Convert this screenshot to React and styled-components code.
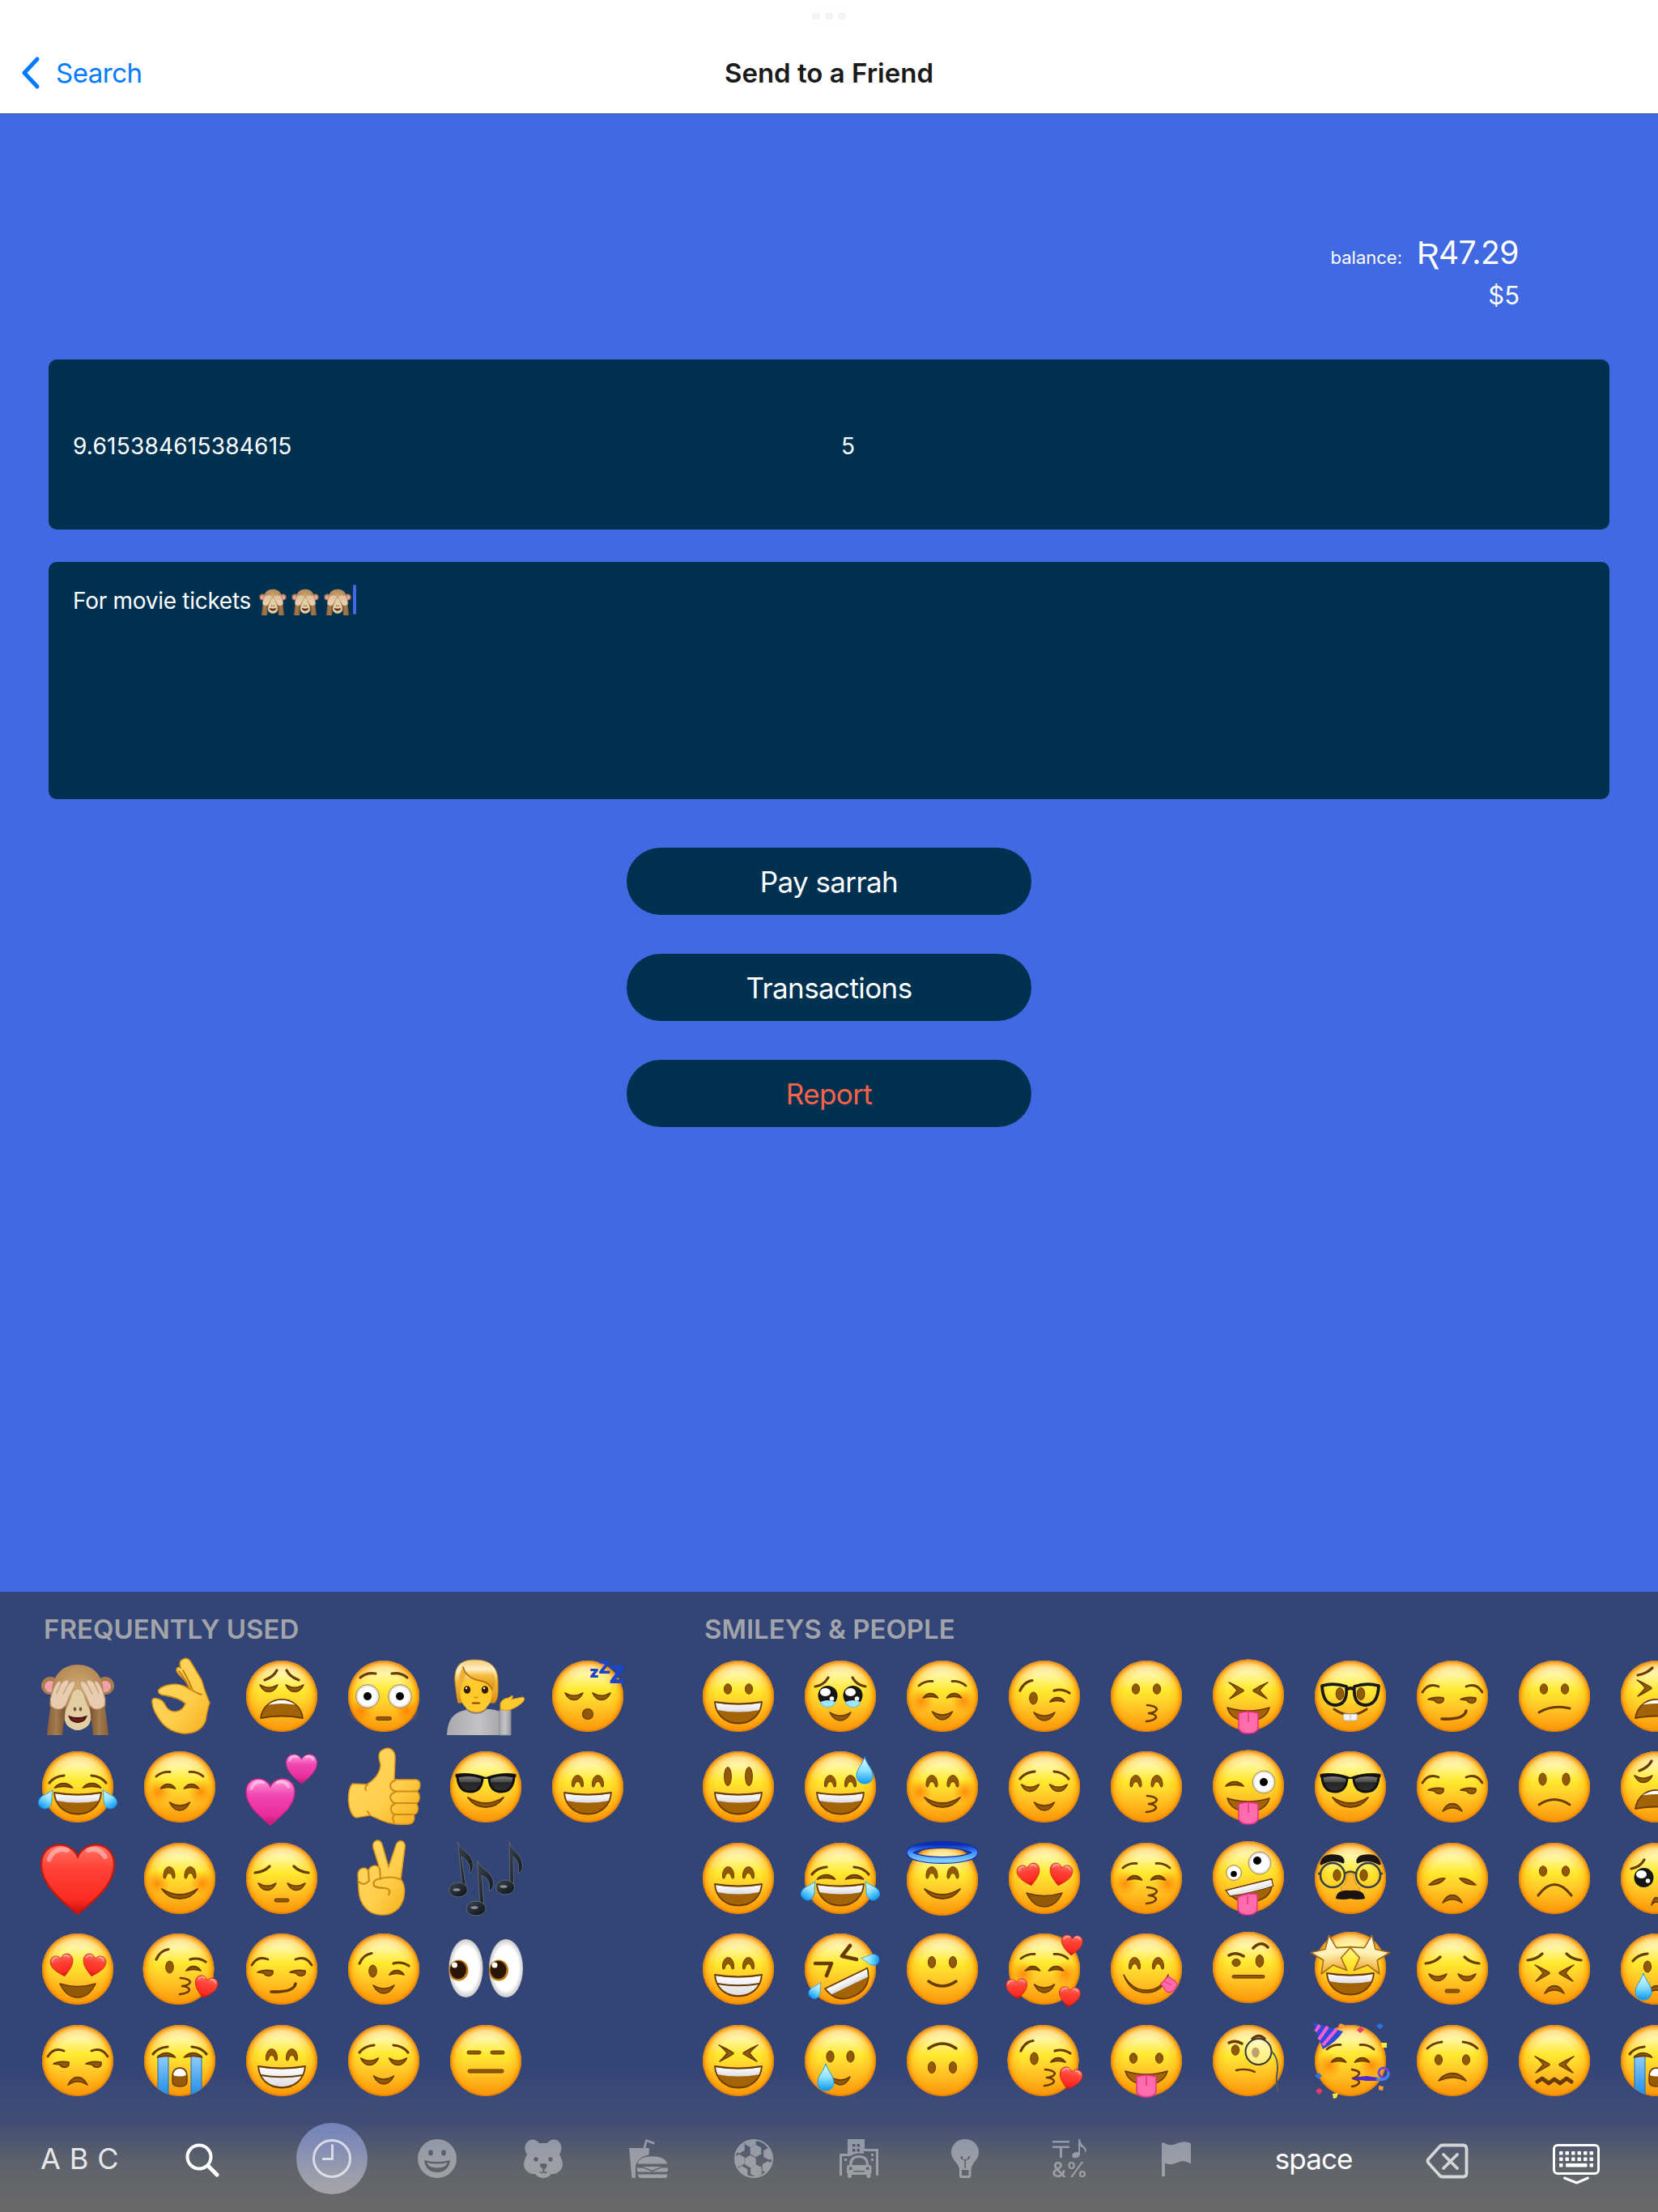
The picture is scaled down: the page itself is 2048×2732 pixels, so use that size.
import React from 'react';
import styled, { createGlobalStyle } from 'styled-components';

const GlobalStyle = createGlobalStyle`
  *, *::before, *::after { box-sizing: border-box; }
  html, body { margin: 0; padding: 0; }
  body {
    font-family: Inter, "Liberation Sans", sans-serif;
    background: #4169e1;
    overflow: hidden;
  }
`;

const Screen = styled.div`
  display: flex;
  flex-direction: column;
  width: 2048px;
  height: 2732px;
  background: #4169e1;
  overflow: hidden;
`;

/* ---------- navigation bar ---------- */

const NavBar = styled.header`
  display: grid;
  grid-template-columns: 1fr auto 1fr;
  grid-template-rows: 40px 100px;
  height: 141px;
  background: #ffffff;
  border-bottom: 1px solid #33498f;
`;

const Multitask = styled.div`
  grid-column: 1 / -1;
  display: flex;
  justify-content: center;
  align-items: center;
  gap: 6px;
`;

const Dot = styled.i`
  width: 10px;
  height: 10px;
  border-radius: 50%;
  background: #f3f3f4;
`;

const BackButton = styled.div`
  display: flex;
  align-items: center;
  padding-left: 24px;
  color: #007aff;
  font-size: 33px;
  letter-spacing: -0.5px;
  line-height: 40px;
`;

const BackArrow = styled.svg`
  width: 28px;
  height: 44px;
  margin-right: 17px;
  fill: none;
  stroke: #007aff;
  stroke-width: 5;
  stroke-linecap: round;
  stroke-linejoin: round;
`;

const Title = styled.h1`
  margin: 0;
  align-self: center;
  font-size: 33px;
  font-weight: 600;
  line-height: 40px;
  color: #1a1a1a;
`;

/* ---------- payment form ---------- */

const Content = styled.main`
  height: 1825px;
  display: flex;
  flex-direction: column;
  align-items: stretch;
  padding: 143px 60px 0;
  color: #ffffff;
`;

const Balance = styled.div`
  display: flex;
  flex-direction: column;
  align-items: flex-end;
  height: 160px;
  padding-right: 111px;
`;

const BalanceLine = styled.div`
  display: flex;
  align-items: baseline;
  gap: 18px;
  height: 56px;
  padding-right: 1px;
  line-height: 56px;
`;

const BalanceLabel = styled.span`
  font-size: 22px;
`;

const BalanceValue = styled.span`
  font-size: 39px;
  letter-spacing: -0.5px;
`;

const Currency = styled.span`
  font-family: "Liberation Sans", sans-serif;
  font-size: 41px;
  letter-spacing: -0.5px;
`;

const Fiat = styled.div`
  font-size: 31px;
  line-height: 50px;
`;

const Panel = styled.section`
  display: flex;
  flex: none;
  align-items: ${(p) => (p.$top ? 'flex-start' : 'center')};
  height: ${(p) => p.$height}px;
  margin-bottom: 40px;
  padding: ${(p) => (p.$top ? '28px 30px' : '3px 30px 0')};
  border-radius: 10px;
  background: #003151;
  font-size: 28px;
  line-height: 40px;
`;

const Amount = styled.div`
  flex: none;
  width: 949px;
  letter-spacing: 0.22px;
`;

const Note = styled.span`
  white-space: pre;
  letter-spacing: -0.28px;
`;

const NoteEmoji = styled.span`
  display: inline-flex;
  gap: 6px;
  margin-left: 2px;
`;

const MiniEmoji = styled.svg`
  width: 34px;
  height: 34px;
  margin-top: 4px;
  overflow: visible;
`;

const Caret = styled.span`
  width: 4px;
  height: 37px;
  margin: 0 0 0 2px;
  border-radius: 2px;
  background: #4169e1;
`;

const Actions = styled.div`
  display: flex;
  flex-direction: column;
  align-items: center;
  gap: 48px;
  margin-top: 20px;
`;

const ActionButton = styled.button`
  width: 500px;
  height: 83px;
  padding: 1px 0 0;
  border: 0;
  border-radius: 42px;
  background: #003151;
  color: ${(p) => (p.$danger ? '#ff6347' : '#ffffff')};
  font-family: inherit;
  font-size: 35px;
  letter-spacing: -0.6px;
`;

/* ---------- emoji keyboard ---------- */

const Keyboard = styled.section`
  display: flex;
  flex-direction: column;
  height: 766px;
  background: linear-gradient(
    180deg,
    #334477 0,
    #334477 585px,
    #3b4a78 625px,
    #414d75 655px,
    #50586f 682px,
    #5e626b 706px,
    #656668 735px,
    #686868 766px
  );
`;

const Sections = styled.div`
  display: flex;
  gap: 60px;
  height: 634px;
  padding-left: 33px;
  overflow: hidden;
`;

const Section = styled.div`
  flex: none;
`;

const SectionTitle = styled.h2`
  margin: 0;
  height: 72.7px;
  padding: 26px 0 0 21px;
  font-size: 33px;
  font-weight: 600;
  line-height: 41px;
  color: #a2a4a9;
`;

const EmojiGrid = styled.div`
  display: grid;
  grid-auto-flow: column;
  grid-template-rows: repeat(5, 112.6px);
  grid-auto-columns: 126px;
`;

const EmojiSvg = styled.svg`
  display: block;
  width: 126px;
  height: 112px;
  overflow: visible;
`;

const BottomBar = styled.div`
  display: flex;
  align-items: center;
  height: 132px;
  padding-left: 50px;
  color: #ffffff;
  font-size: 35px;
  line-height: 42px;
`;

const AbcKey = styled.div`
  width: 162px;
  white-space: nowrap;
  font-size: 36px;
  letter-spacing: 0.4px;
  color: #e6e6e9;
`;

const KeySlot = styled.div`
  display: flex;
  justify-content: center;
  width: ${(p) => p.$width}px;
  letter-spacing: -0.9px;
`;

const CategoryKey = styled.div`
  display: flex;
  justify-content: center;
  width: 130.3px;
`;

const CategoryDisc = styled.div`
  display: flex;
  align-items: center;
  justify-content: center;
  width: 88px;
  height: 88px;
  border-radius: 50%;
  background: ${(p) =>
    p.$active ? 'linear-gradient(180deg, #7283bb 0%, #8790b4 40%, #9a9cac 70%, #a6a6a8 100%)' : 'transparent'};
`;

const CategoryIcon = styled.svg`
  width: 48px;
  height: 48px;
  overflow: visible;
  fill: #ffffff;
  opacity: ${(p) => (p.$active ? 0.68 : 0.39)};
`;

const BarIcon = styled.svg`
  width: ${(p) => p.$w}px;
  height: ${(p) => p.$h}px;
  margin-top: ${(p) => p.$drop}px;
  fill: none;
  stroke: #ffffff;
  stroke-linecap: round;
  stroke-linejoin: round;
  opacity: ${(p) => p.$opacity || 1};
`;

/* ---------- shared paint ---------- */

const Paint = styled.svg`
  position: absolute;
  width: 0;
  height: 0;
`;

const EmojiPaint = () => (
  <Paint>
    <defs>
      <linearGradient id="skin" x1="0" y1="0" x2="0" y2="1">
        <stop offset="0" stopColor="#fffbd6" />
        <stop offset=".16" stopColor="#fff9b4" />
        <stop offset=".42" stopColor="#ffe92f" />
        <stop offset=".6" stopColor="#ffcf2b" />
        <stop offset=".8" stopColor="#ffb31a" />
        <stop offset="1" stopColor="#f2940e" />
      </linearGradient>
      <radialGradient id="rim" cx=".5" cy=".5" r=".5" fx=".5" fy=".5">
        <stop offset=".62" stopColor="#ff9f0a" stopOpacity="0" />
        <stop offset=".82" stopColor="#ffa008" stopOpacity=".26" />
        <stop offset=".93" stopColor="#ff9900" stopOpacity=".72" />
        <stop offset="1" stopColor="#d8740a" stopOpacity=".98" />
      </radialGradient>
      <radialGradient id="blush">
        <stop offset="0" stopColor="#ff7400" stopOpacity=".75" />
        <stop offset="1" stopColor="#ff8a00" stopOpacity="0" />
      </radialGradient>
      <linearGradient id="hand" x1="0" y1="0" x2="1" y2="1">
        <stop offset="0" stopColor="#ffd968" />
        <stop offset=".6" stopColor="#ffce4a" />
        <stop offset="1" stopColor="#f5ad1c" />
      </linearGradient>
      <linearGradient id="teeth" x1="0" y1="0" x2="0" y2="1">
        <stop offset="0" stopColor="#ffffff" />
        <stop offset="1" stopColor="#dcdce4" />
      </linearGradient>
      <linearGradient id="red" x1="0" y1="0" x2="0" y2="1">
        <stop offset="0" stopColor="#ff7466" />
        <stop offset=".35" stopColor="#ff4136" />
        <stop offset=".8" stopColor="#fb2a20" />
        <stop offset="1" stopColor="#c40d0d" />
      </linearGradient>
      <linearGradient id="pink" x1="0" y1="0" x2="0" y2="1">
        <stop offset="0" stopColor="#ff9fdc" />
        <stop offset=".35" stopColor="#f146b2" />
        <stop offset=".8" stopColor="#e82a9b" />
        <stop offset="1" stopColor="#c3136c" />
      </linearGradient>
      <linearGradient id="water" x1="0" y1="0" x2="0" y2="1">
        <stop offset="0" stopColor="#e8fbff" />
        <stop offset=".5" stopColor="#8fe2ff" />
        <stop offset="1" stopColor="#0a98f5" />
      </linearGradient>
      <linearGradient id="stream" x1="0" y1="0" x2="0" y2="1">
        <stop offset="0" stopColor="#8fcdf8" />
        <stop offset="1" stopColor="#1f8be6" />
      </linearGradient>
      <linearGradient id="lens" x1="0" y1="0" x2="0" y2="1">
        <stop offset="0" stopColor="#8a8a8a" />
        <stop offset=".4" stopColor="#4a4a4a" />
        <stop offset=".45" stopColor="#262626" />
        <stop offset="1" stopColor="#303030" />
      </linearGradient>
      <radialGradient id="white">
        <stop offset=".75" stopColor="#ffffff" />
        <stop offset="1" stopColor="#c9c9c9" />
      </radialGradient>
      <linearGradient id="star" x1="0" y1="0" x2="0" y2="1">
        <stop offset="0" stopColor="#fffef2" />
        <stop offset=".5" stopColor="#fdefb0" />
        <stop offset="1" stopColor="#eca52a" />
      </linearGradient>
      <linearGradient id="halo" x1="0" y1="0" x2="0" y2="1">
        <stop offset="0" stopColor="#0b2fb8" />
        <stop offset=".5" stopColor="#3f8cff" />
        <stop offset="1" stopColor="#7fcaff" />
      </linearGradient>
      <radialGradient id="fur" cx=".5" cy=".4" r=".6">
        <stop offset="0" stopColor="#d0a873" />
        <stop offset=".7" stopColor="#b58a58" />
        <stop offset="1" stopColor="#8b6540" />
      </radialGradient>
      <linearGradient id="arm" x1="0" y1="0" x2="1" y2="0">
        <stop offset="0" stopColor="#866039" />
        <stop offset=".5" stopColor="#a67c4f" />
        <stop offset="1" stopColor="#775231" />
      </linearGradient>
      <linearGradient id="shirt" x1="0" y1="0" x2="1" y2="0">
        <stop offset="0" stopColor="#a9a9ad" />
        <stop offset=".5" stopColor="#c3c3c6" />
        <stop offset="1" stopColor="#98989c" />
      </linearGradient>
      <linearGradient id="hair" x1="0" y1="0" x2="0" y2="1">
        <stop offset="0" stopColor="#f6cf86" />
        <stop offset=".25" stopColor="#fff0c4" />
        <stop offset=".5" stopColor="#f3bb3e" />
        <stop offset="1" stopColor="#dc8d10" />
      </linearGradient>
      <linearGradient id="ink" x1="0" y1="0" x2="1" y2="1">
        <stop offset="0" stopColor="#3c4650" />
        <stop offset="1" stopColor="#0d1014" />
      </linearGradient>
      <clipPath id="faceClip"><circle r="44" /></clipPath>
    </defs>
  </Paint>
);

/* ---------- emoji building blocks, centred on 0,0 with a 44px face ---------- */

const BROWN = '#6a3b00';
const EYE = '#925a08';

const At = ({ x = 0, y = 0, flip, rot = 0, s = 1, children }) => (
  <g transform={`translate(${x} ${y}) rotate(${rot}) scale(${flip ? -s : s} ${s})`}>{children}</g>
);
const Pair = ({ x, y, children }) => (
  <>
    <At x={-x} y={y}>{children}</At>
    <At x={x} y={y} flip>{children}</At>
  </>
);
const Disc = ({ x = 0, y = 0 }) => (
  <g transform={`translate(${x} ${y})`}>
    <circle r="44" fill="url(#skin)" />
    <circle r="44" fill="url(#rim)" />
  </g>
);
const Stroke = ({ d, w = 3.2, c = BROWN }) => (
  <path d={d} fill="none" stroke={c} strokeWidth={w} strokeLinecap="round" strokeLinejoin="round" />
);
const Dots = ({ x = 13, y = -9, rx = 4.6, ry = 6.2 }) => (
  <>
    <ellipse cx={-x} cy={y} rx={rx} ry={ry} fill={EYE} stroke={BROWN} strokeWidth="1" />
    <ellipse cx={x} cy={y} rx={rx} ry={ry} fill={EYE} stroke={BROWN} strokeWidth="1" />
  </>
);
const ArchEye = () => (
  <path d="M-7 6C-7.500-10.500 7.500-10.500 7 6C6.500 9 4.800 9 4 6C2.500 0-2.500 0-4 6C-4.800 9-6.500 9-7 6Z" fill={EYE} stroke={BROWN} strokeWidth="1" />
);
const Arches = ({ x = 12.5, y = -8 }) => <Pair x={x} y={y}><ArchEye /></Pair>;
const ShutEye = ({ w = 9 }) => (
  <path d={`M${-w} 3C${-w / 2}-4 ${w / 2}-4 ${w} 3Q0-.5 ${-w} 3Z`} fill={EYE} stroke={BROWN} strokeWidth="1.800" strokeLinejoin="round" />
);
const DownEye = () => (
  <path d="M-11-4Q0 2.500 11-4Q7 4.500 0 4.500Q-7 4.500-11-4Z" fill={EYE} stroke={BROWN} strokeWidth="1.600" strokeLinejoin="round" />
);
const Squint = ({ x = 14, y = -8 }) => (
  <Pair x={x} y={y}>
    <path d="M-9-10Q0-6 8.500-1Q9.500 0 8.500 1Q0 6-8 10Q-2 4 1 0Q-2-5-9-10Z" fill={EYE} stroke={BROWN} strokeWidth="1.400" strokeLinejoin="round" />
  </Pair>
);
const SideEye = ({ x = 20, y = 4 }) => (
  <>
    {[-x, x].map((cx) => (
      <At key={cx} x={cx} y={y}>
        <path d="M-10 0Q-3-4 9-2Q10 4 4 4.500Q-1 4-2 1Z" fill={EYE} stroke={BROWN} strokeWidth="1.600" strokeLinejoin="round" />
      </At>
    ))}
  </>
);
const FlatBrows = ({ x = 27, y = -10 }) => <Pair x={x} y={y}><Stroke d="M-10 5Q-3-7 10-2" w={2.8} /></Pair>;
const SoftBrows = ({ x = 20, y = -16 }) => <Pair x={x} y={y}><Stroke d="M-9 3Q-2-3 8-2.500" w={2.8} /></Pair>;
const RaisedBrows = ({ x = 21, y = -15 }) => <Pair x={x} y={y}><Stroke d="M-9 5Q-3-3 9-4" /></Pair>;
const SadBrows = ({ x = 24, y = -12 }) => <Pair x={x} y={y}><Stroke d="M-9 4Q2 3 9-4" /></Pair>;
const Blush = ({ x = 27, y = 6 }) => (
  <>
    <circle cx={-x} cy={y} r="16" fill="url(#blush)" />
    <circle cx={x} cy={y} r="16" fill="url(#blush)" />
  </>
);
const Grin = ({ full }) => (
  <g strokeLinejoin="round">
    <path d="M-29 7Q0 12 29 7C28 23 16 33.500 0 33.500C-16 33.500-28 23-29 7Z" fill="#a36307" />
    {full ? (
      <>
        <path d="M-28 8Q0 13 28 8C27 23 15 32 0 32C-15 32-27 23-28 8Z" fill="url(#teeth)" />
        <Stroke d="M-26 18Q0 22.500 26 18" w={2} />
      </>
    ) : (
      <path d="M-28 8Q0 13 28 8Q28 14 26 17Q0 22 -26 17Q-28 14-28 8Z" fill="url(#teeth)" />
    )}
    <path d="M-29 7Q0 12 29 7C28 23 16 33.500 0 33.500C-16 33.500-28 23-29 7Z" fill="none" stroke={BROWN} strokeWidth="1.800" />
  </g>
);
const SmallSmile = ({ y = 24, w = 12.5 }) => (
  <path transform={`translate(0 ${y})`} d={`M${-w}-5Q0 3 ${w}-5Q${w * 0.6} 5 0 5Q${-w * 0.6} 5 ${-w}-5Z`} fill={EYE} stroke={BROWN} strokeWidth="1.600" strokeLinejoin="round" />
);
const SmallFrown = ({ y = 25, w = 12 }) => (
  <path transform={`translate(0 ${y})`} d={`M${-w} 5C${-w * 0.5}-7.500 ${w * 0.5}-7.500 ${w} 5Q0-3 ${-w} 5Z`} fill={EYE} stroke={BROWN} strokeWidth="1.600" strokeLinejoin="round" />
);
const WideSmile = () => (
  <path d="M-22 13Q0 27 22 13Q14 25 0 25Q-14 25-22 13Z" fill={EYE} stroke={BROWN} strokeWidth="1.800" strokeLinejoin="round" />
);
const Wail = () => (
  <>
    <path d="M-26 27C-24 12-12 4 0 4C12 4 24 12 26 27Q0 22-26 27Z" fill="#a36307" stroke={BROWN} strokeWidth="1.800" strokeLinejoin="round" />
    <path d="M-17 10.500Q0-1 17 10.500Q0 7.500-17 10.500Z" fill="#fff" />
  </>
);
const TongueMouth = ({ y = 13 }) => (
  <At y={y}>
    <path d="M-26 0Q0 8 26 0C22 13 12 16 0 16C-12 16-22 13-26 0Z" fill="#a36307" stroke={BROWN} strokeWidth="1.600" strokeLinejoin="round" />
    <path d="M-12 7Q0 3 12 7V23Q12 32 0 32Q-12 32-12 23Z" fill="#ff6cab" stroke="#ec2f84" strokeWidth="1.500" />
    <path d="M0 6V18" stroke="#e8357f" strokeWidth="1.500" />
  </At>
);
const Kiss = ({ x = 6, y = 21 }) => (
  <At x={x} y={y}>
    <Stroke d="M-5-10Q6-9 7-5Q6-1-3 0Q6 1 6 5Q4 9-6 10" w={2.6} />
  </At>
);
const Heart = ({ x, y, w = 28, rot = 0, fill = 'url(#red)', edge = '#c21a10' }) => (
  <At x={x} y={y} rot={rot} s={w / 28}>
    <path d="M0 14C-6 9-14 3-14-5C-14-14-3-15 0-8C3-15 14-14 14-5C14 3 6 9 0 14Z" fill={fill} stroke={edge} strokeWidth=".7" />
    <path d="M-11-7Q-9-12-4-10.500M4-10.500Q8-12 10.500-8" stroke="#fff" strokeOpacity=".4" strokeWidth="1.800" strokeLinecap="round" fill="none" />
  </At>
);
const Drop = ({ x, y, s = 1, rot = 0 }) => (
  <At x={x} y={y} s={s} rot={rot}>
    <path d="M0-17C3-7 10-2 10 6C10 12.500 5.500 16 0 16C-5.500 16-10 12.500-10 6C-10-2-3-7 0-17Z" fill="url(#water)" stroke="#149bea" strokeWidth="1" />
  </At>
);
const JoyTears = () => (
  <>
    <At x={-38} y={15} rot={32}><Drop x={0} y={0} s={0.78} /></At>
    <At x={38} y={15} rot={-32}><Drop x={0} y={0} s={0.78} /></At>
  </>
);
const BigEye = ({ x, y, r = 14.5, p = 5, px = 0, py = 0 }) => (
  <>
    <circle cx={x} cy={y} r={r} fill="url(#white)" stroke="#a97c1e" strokeWidth=".8" />
    <circle cx={x + px} cy={y + py} r={p} fill="#000" />
  </>
);
const PleadEyes = ({ wet }) => (
  <>
    {[-15.5, 15.5].map((x) => (
      <At key={x} x={x} y={-1}>
        {wet && <ellipse cy="6" rx="10" ry="9" fill="#45c4f5" />}
        <circle r="12" fill="#161616" />
        <ellipse cx="-3" cy="-4" rx="6.500" ry="5" fill="#fff" />
        <circle cx="5" cy="4" r="2.800" fill="#fff" />
        {wet && <path d="M-9 8Q0 4 9 8Q6 14 0 14Q-6 14-9 8Z" fill="#9fe6ff" />}
      </At>
    ))}
  </>
);
const WinkParts = ({ dx = 0, dy = 0 }) => (
  <At x={dx} y={dy}>
    <Stroke d="M-30-7Q-25-18-15-19.500" />
    <Stroke d="M12-7Q22-10 31-4" />
    <ellipse cx="-13.500" cy="2.500" rx="4.800" ry="7.500" fill={EYE} stroke={BROWN} strokeWidth="1" />
    <At x={16} y={4}><ShutEye /></At>
  </At>
);
const Starry = ({ x, y, rot }) => (
  <At x={x} y={y} rot={rot}>
    <path d="M0-25L7-8.500L25-7L11 4.500L16 21L0 12L-16 21L-11 4.500L-25-7L-7-8.500Z" fill="url(#star)" stroke="#a86a10" strokeWidth="1.600" strokeLinejoin="round" />
  </At>
);
const Shades = () => (
  <>
    <path d="M-37-16Q-20-19 0-12Q20-19 37-16Q39-13 35-10L-35-10Q-39-13-37-16Z" fill="#161616" />
    <path d="M-35-13Q-18-17-4-11Q-5 6-19 6Q-34 6-35-13Z" fill="url(#lens)" stroke="#111" strokeWidth="3" />
    <path d="M35-13Q18-17 4-11Q5 6 19 6Q34 6 35-13Z" fill="url(#lens)" stroke="#111" strokeWidth="3" />
  </>
);

const MonkeyArt = () => (
  <g>
    <circle cx="-34" cy="-13" r="11" fill="#a87c4c" />
    <circle cx="-34" cy="-12" r="7" fill="#f0a0a4" />
    <circle cx="34" cy="-13" r="11" fill="#a87c4c" />
    <circle cx="34" cy="-12" r="7" fill="#f0a0a4" />
    <path d="M0-39C22-39 32-22 32-4C38 8 34 25 22 30H-22C-34 25-38 8-32-4C-32-22-22-39 0-39Z" fill="url(#fur)" />
    <path d="M-6-5Q0-12 6-5Q10 8 15 18Q18 32 12 37Q6 42 0 42Q-6 42-12 37Q-18 32-15 18Q-10 8-6-5Z" fill="#e3cda2" />
    <path d="M-10.500 25Q0 29 10.500 25Q8 32 0 32Q-8 32-10.500 25Z" fill="#7a1720" stroke="#3b1606" strokeWidth="1.800" />
    <ellipse cx="-3.500" cy="16" rx="1.800" ry="2.400" fill="#7b5233" />
    <ellipse cx="3.500" cy="16" rx="1.800" ry="2.400" fill="#7b5233" />
    <Pair x={21} y={0}>
      <path d="M-9 8L6 12L2 48H-17Q-15 26-12 12Z" fill="url(#arm)" />
      <path d="M-12 12Q-14 4-10-6Q-6-17-2-19Q1-19 0-15Q5-21 9-20Q11-18 9-14Q14-20 17-18Q19-16 16-10Q11-2 8 6Q6 13 2 15Q-5 18-12 12Z" fill="#e8ccb0" stroke="#c09a75" strokeWidth="1" />
      <Stroke d="M0-15L-5-4M9-14L3-3" w={1.3} c="#c49a74" />
    </Pair>
  </g>
);

const EMOJI = {
  monkey: <MonkeyArt />,
  ok: (
    <g>
      <path d="M3-45Q10-50 15-40L27-20Q31-5 37 8Q34 16 32 30Q26 46 5 46Q-14 44-24 30Q-33 18-34 8Q-35 1-28 3Q-22 4-19 9Q-14 20-5 19Q4 18 7 9Q0 2-18-1Q-28-2-26-8Q-21-14-5-15Q6-14 14-7Q9-18 0-26Q-6-32-3-35Q-1-37 2-34Q-2-42 3-45Z" fill="url(#hand)" stroke="#dc9518" strokeWidth="1.500" />
      <Stroke d="M4-32Q12-18 16-7Q22-3 27-2M-1-31Q8-20 12-9" w={2} c="#c57f10" />
      <Stroke d="M7 9Q0 2-18-1" w={1.6} c="#d08c17" />
    </g>
  ),
  weary: (<><Disc /><Pair x={14} y={-26}><Stroke d="M-7 6Q4 2 8-6" /></Pair><Pair x={16} y={-10}><DownEye /></Pair><Wail /></>),
  joy: (<><Disc /><RaisedBrows x={26} y={-10} /><Pair x={17.5} y={-2}><ShutEye w={11} /></Pair><Grin /><JoyTears /></>),
  relaxed: (<><Disc /><Blush x={26} /><SoftBrows /><Pair x={14.500} y={-1}><ShutEye /></Pair><SmallSmile /></>),
  hearts: (<><Heart x={-14} y={17} w={60} fill="url(#pink)" edge="#c92588" /><Heart x={24.500} y={-23} w={38} fill="url(#pink)" edge="#c92588" /></>),
  heart: <Heart x={0} y={-1} w={90} />,
  blush: (<><Disc /><Blush x={28} /><Arches x={13} /><WideSmile /></>),
  pensive: (<><Disc /><SadBrows y={-11} /><Pair x={18} y={10}><DownEye /></Pair><rect x="-9" y="25" width="18" height="4" rx="2" fill={EYE} stroke={BROWN} /></>),
  heartEyes: (<><Disc /><Heart x={-19} y={-5} w={28} rot={-12} /><Heart x={20} y={-5} w={28} rot={12} /><path d="M-22 18Q0 25 22 18Q14 35 0 35Q-14 35-22 18Z" fill={EYE} stroke={BROWN} strokeWidth="1.500" strokeLinejoin="round" /></>),
  kissHeart: (<><Disc x={-1.5} /><WinkParts dx={1} dy={-5} /><Kiss x={6} /><Heart x={32} y={22} w={28} rot={14} /></>),
  smirk: (<><Disc /><FlatBrows /><SideEye /><Stroke d="M-13 28Q15 29 17 18" w={3.6} /></>),
  unamused: (<><Disc /><FlatBrows /><SideEye /><SmallFrown /></>),
  sob: (
    <>
      <Disc />
      <RaisedBrows x={24} y={-13} />
      <g clipPath="url(#faceClip)">
        <rect x="-27" y="-6" width="13" height="50" fill="url(#stream)" stroke="#1f6fb5" strokeWidth="1" />
        <rect x="14" y="-6" width="13" height="50" fill="url(#stream)" stroke="#1f6fb5" strokeWidth="1" />
      </g>
      <Pair x={16.5} y={-7}><ShutEye w={11} /></Pair>
      <path d="M-9 20Q-9 9 0 9Q9 9 9 20V26Q9 32 0 32Q-9 32-9 26Z" fill="#965908" stroke={BROWN} strokeWidth="1.400" />
      <path d="M-8 18Q-7 10 0 10Q7 10 8 18Q0 21-8 18Z" fill="#fff" />
    </>
  ),
  beam: (<><Disc /><Arches /><Grin full /></>),
  flushed: (<><Disc /><Blush x={28} y={18} /><Pair x={20} y={-26}><Stroke d="M-9 3Q-1-4 10-2" /></Pair><BigEye x={-20} y={0} /><BigEye x={20} y={0} /><rect x="-9.500" y="25.500" width="19" height="4" rx="2" fill={EYE} stroke={BROWN} /></>),
  thumb: (
    <g>
      <path d="M-4-44C6-52 15-46 14-34L13-9H40C47-8 46 4 40 5C46 8 45 19 40 20C44 24 43 33 37 34C39 40 37 46 30 46C10 48-2 42-17 35L-34 38C-46 34-46 0-38-4L-21-3C-10-10-4-18-4-28Q-8-40-4-44Z" fill="url(#hand)" stroke="#dc9518" strokeWidth="1.500" />
      <Stroke d="M40 5.500H16M39 20H15M36 34H14M14-8Q8-6 8-1Q9 5 16 5.500Q8 8 8 13Q10 20 15 20Q8 23 9 28Q10 34 14 34Q9 37 13 44M-20-3Q-24 0-22 4M-17 35L-20 30" w={2} c="#cd8a18" />
    </g>
  ),
  peace: (
    <g>
      <path d="M-13-38C-15-48-4-50-2-42L6-14L15-41C18-50 28-47 26-37L21 1C27 8 28 24 19 36Q10 46-4 45C-20 44-30 32-31 14L-32-4C-32-14-22-15-19-9C-16-18-8-17-5-12Z" fill="url(#hand)" stroke="#dc9518" strokeWidth="1.500" />
      <Stroke d="M-19-8L-18 3Q-25 10-31 4M-5-12L-4 1M20 1Q10-4-8 1Q-14 3-12 9Q-8 12 2 12Q10 14 6 20" w={2.2} c="#cd8a18" />
    </g>
  ),
  wink: (<><Disc /><WinkParts /><SmallSmile y={25} w={13} /></>),
  relieved: (<><Disc /><RaisedBrows /><Pair x={17.5} y={1}><DownEye /></Pair><SmallSmile /></>),
  tipping: (
    <g>
      <path d="M-48 48C-47 28-40 18-18 16H6C22 18 29 24 31 48Z" fill="url(#shirt)" />
      <path d="M-24 16Q-12 26 1 16L0 10H-23Z" fill="#f7a91c" stroke="#77777c" strokeWidth="1.500" />
      <path d="M-38-18C-39-34-34-45-14-45C8-45 15-34 15-18C15-6 16 2 11 8L4 8H-28L-34 8Q-36 0-38-18Z" fill="url(#hair)" stroke="#d08f1c" strokeWidth="1" />
      <path d="M-31-16Q-12-28 7-14Q9 2 4 10Q-2 19-12 19Q-22 19-28 10Q-33 2-31-16Z" fill="#ffca2a" />
      <path d="M-28-36Q-24-22-6-19Q4-17 8-8Q13-14 11-26Q8-40-14-42Q-24-42-28-36Z" fill="url(#hair)" />
      <path d="M-28-36Q-35-26-33-12L-30-6Q-30-18-24-27Z" fill="#efb038" />
      <Stroke d="M-28-36Q-24-22-6-19Q4-17 8-8" w={1.8} c="#b9740c" />
      <ellipse cx="-23" cy="-8" rx="4.200" ry="4.800" fill="#3a1c00" /><ellipse cx="-1" cy="-8" rx="4.200" ry="4.800" fill="#3a1c00" />
      <circle cx="-24" cy="-10" r="1.200" fill="#fff" /><circle cx="-2" cy="-10" r="1.200" fill="#fff" />
      <Stroke d="M-14 1Q-12 3-10 1" w={1.6} c="#d08c17" />
      <Stroke d="M-16 8.500H-8" w={2.2} c="#8b3a10" />
      <path d="M17 17Q24 14 31 17V48H17Z" fill="url(#shirt)" stroke="#88888c" strokeWidth="1" />
      <path d="M18 16V9Q20 3 28 2L33-1Q34 3 31 4L46 1Q50 3 45 8Q38 14 32 16Q25 19 18 16Z" fill="#ffca2e" stroke="#dc9518" strokeWidth="1" />
    </g>
  ),
  cool: (<><Disc /><Shades /><WideSmile /></>),
  notes: (
    <g fill="url(#ink)" stroke="#5c6674" strokeWidth="1">
      <path d="M-34.500-45C-30-32-14-32-16-12Q-17-8-20-6Q-17-20-30-27L-24 14H-28.500Z" />
      <ellipse cx="-34" cy="14" rx="11.500" ry="9" />
      <path d="M-10.500-22C-6-10 12-8 9 10Q8 14 4 16Q7 1-5-4L-2 36H-7Z" />
      <ellipse cx="-12" cy="37" rx="12" ry="9" />
      <path d="M29-45C33-32 47-30 45-12Q44-8 40-6Q43-20 34-27L34.500 10H30Z" />
      <ellipse cx="24" cy="11" rx="11.500" ry="9" />
      <g fill="#a9b4bf" stroke="none" opacity=".75">
        <ellipse cx="-36" cy="14" rx="4.500" ry="1.800" />
        <ellipse cx="-14" cy="36" rx="4.500" ry="1.800" />
        <ellipse cx="22" cy="10" rx="4.500" ry="1.800" />
      </g>
    </g>
  ),
  eyes: (
    <g>
      {[-24.5, 25].map((x) => (
        <g key={x}>
          <ellipse cx={x} cy="-1" rx="21" ry="36" fill="url(#white)" />
          <ellipse cx={x - 9} cy="1.500" rx="12" ry="13" fill="#b97a10" />
          <ellipse cx={x - 9.5} cy="1" rx="10" ry="11" fill="#2a1403" />
          <circle cx={x - 14} cy="-5" r="3.500" fill="#fff" />
        </g>
      ))}
    </g>
  ),
  expressionless: (<><Disc /><g fill={EYE} stroke={BROWN} strokeWidth="1"><rect x="-23" y="-12" width="17" height="4" rx="2" /><rect x="6" y="-12" width="17" height="4" rx="2" /><rect x="-22" y="11" width="44" height="4" rx="2" /></g></>),
  sleeping: (
    <>
      <Disc />
      <Pair x={17} y={0}><DownEye /></Pair>
      <circle cy="22" r="6.500" fill={EYE} stroke={BROWN} strokeWidth="1.200" />
      <g fill="#1c46c8" fontFamily="Inter, sans-serif" fontWeight="900">
        <text x="2" y="-23" fontSize="20">z</text>
        <text x="13" y="-28" fontSize="22">Z</text>
        <text x="26" y="-16" fontSize="30">Z</text>
      </g>
    </>
  ),
  smile: (<><Disc /><Arches /><Grin /></>),
  grinning: (<><Disc /><Dots /><Grin /></>),
  smiley: (<><Disc /><Dots y={-13} ry={11.5} rx={4.4} /><Grin /></>),
  laughing: (<><Disc /><Squint x={15} y={-9} /><Grin /></>),
  tears: (<><Disc /><Pair x={23} y={-17}><Stroke d="M-8 5Q3 3 8-6" /></Pair><PleadEyes wet /><SmallSmile y={25} w={13} /></>),
  sweat: (<><Disc /><Arches /><Grin /><Drop x={30} y={-20} /></>),
  rofl: (
    <>
      <Disc />
      <Stroke d="M-31-7L-11-7L-17 8M12-29L2-16L20-12" w={4.6} />
      <At x={9} y={15} rot={-26}>
        <path d="M-29-4H29C26 13 14 20 0 20C-14 20-26 13-29-4Z" fill="#a36307" stroke={BROWN} strokeWidth="1.800" strokeLinejoin="round" />
        <path d="M-28-3H28L25 6H-25Z" fill="url(#teeth)" />
      </At>
      <Drop x={37} y={-12} s={0.68} rot={-82} />
      <Drop x={-30} y={26} s={0.68} rot={32} />
    </>
  ),
  smileTear: (<><Disc /><Dots x={12.5} y={-5} ry={7} /><SmallSmile y={25} w={12} /><Drop x={-18} y={21} /></>),
  angel: (<><Disc y={2} /><Arches x={13} /><WideSmile /><ellipse cy="-32" rx="40" ry="9.500" fill="none" stroke="#0a2ca8" strokeWidth="9" /><ellipse cy="-32" rx="40" ry="9.500" fill="none" stroke="url(#halo)" strokeWidth="6.500" /></>),
  slight: (<><Disc /><Dots y={-8.5} ry={7} /><Stroke d="M-17 15Q0 27 17 15" w={3.4} /></>),
  upside: (<><Disc /><Dots y={8.5} ry={7} /><Stroke d="M-17-15Q0-27 17-15" w={3.4} /></>),
  adore: (<><Disc /><Blush x={26} /><SoftBrows x={20} /><Pair x={14.5} y={-1}><ShutEye /></Pair><SmallSmile /><Heart x={34} y={-30} w={26} rot={4} /><Heart x={-34} y={24} w={26} rot={-4} /><Heart x={31} y={34} w={26} rot={6} /></>),
  kissing: (<><Disc /><Dots /><Kiss /></>),
  kissSmile: (<><Disc /><Arches x={13} /><Kiss /></>),
  kissShut: (<><Disc /><Blush x={26} /><SoftBrows /><Pair x={14.5} y={-1}><ShutEye /></Pair><Kiss /></>),
  yum: (
    <>
      <Disc />
      <Arches x={14.5} />
      <path d="M-28 7Q-18 26 0 26Q18 26 27 7Q20 29 0 29Q-20 29-28 7Z" fill={EYE} stroke={BROWN} strokeWidth="1.600" strokeLinejoin="round" />
      <path d="M18 18L27 9L36 15Q40 20 34 26Q28 31 24 27Z" fill="#ff6cab" stroke="#ec2f84" strokeWidth="1.200" />
      <path d="M22 15L31 20" stroke="#e8357f" strokeWidth="1.300" />
    </>
  ),
  tongue: (<><Disc /><Dots x={16} y={-3} /><TongueMouth /></>),
  tongueSquint: (<><Disc y={-1.5} /><Squint x={15} y={-7} /><TongueMouth y={14} /></>),
  tongueWink: (<><Disc y={-1.5} /><At x={-17} y={-4}><ShutEye w={11} /></At><BigEye x={19} y={-6} r={14} /><TongueMouth y={14} /></>),
  zany: (
    <>
      <Disc y={-2} />
      <BigEye x={-18} y={-7} r={9.5} p={3.8} py={1.5} />
      <BigEye x={14} y={-19} r={14} p={5} px={-3} py={-3} />
      <At y={10} rot={-14}>
        <path d="M-28-2H30Q28 20 4 20Q-18 20-28-2Z" fill="#a36307" stroke={BROWN} strokeWidth="1.600" />
        <path d="M-28-2H30V7Q0 9-25 6Z" fill="url(#teeth)" stroke={BROWN} strokeWidth="1.200" />
      </At>
      <path d="M-13 23Q0 17 11 20V36Q11 45-1 45Q-13 45-13 36Z" fill="#ff6cab" stroke="#ec2f84" strokeWidth="1.500" />
      <path d="M-1 21V32" stroke="#e8357f" strokeWidth="1.500" />
    </>
  ),
  brow: (<><Disc y={-2} /><Stroke d="M-24-17Q-16-22-6-16M6-26Q16-36 24-27" w={3.6} /><ellipse cx="-15" cy="-8" rx="5" ry="4.600" fill={EYE} stroke={BROWN} /><ellipse cx="14" cy="-10" rx="4.800" ry="7.500" fill={EYE} stroke={BROWN} /><rect x="-20" y="7.500" width="40" height="3.600" rx="1.800" fill={EYE} stroke={BROWN} /></>),
  monocle: (
    <>
      <Disc />
      <Stroke d="M-24-22Q-16-26-8-21M5-27Q13-34 20-27" w={3.4} />
      <ellipse cx="-16" cy="-13" rx="4.800" ry="6.200" fill={EYE} stroke={BROWN} />
      <Stroke d="M-15 12Q-2 9 8 14" w={2.4} />
      <ellipse cx="9" cy="-10" rx="4.800" ry="6.200" fill={EYE} />
      <circle cx="12.500" cy="-11" r="16" fill="#fff" fillOpacity=".42" stroke="#33363a" strokeWidth="2" />
      <Stroke d="M29-11Q37-4 36 12Q33 28 37 39" w={2} c="#55585c" />
    </>
  ),
  nerd: (
    <>
      <Disc />
      <Dots y={-3} rx={4.8} ry={7.5} />
      <Stroke d="M-20 16Q0 30 20 16" w={3.2} />
      <path d="M-8.500 22H8.500V28Q8.500 30 5 30H-5Q-8.500 30-8.500 28Z" fill="#f4f4f8" stroke="#b9b9c2" strokeWidth="1" />
      <path d="M0 22V30" stroke="#b9b9c2" />
      <g fill="none" stroke="#17191c" strokeWidth="3.800" strokeLinejoin="round">
        <path d="M-35-13Q-20-17-5-12Q-3 10-18 11Q-34 11-35-13ZM35-13Q20-17 5-12Q3 10 18 11Q34 11 35-13ZM-5-8Q0-12 5-8" />
      </g>
    </>
  ),
  disguise: (
    <>
      <Disc />
      <Dots x={16.5} y={-4} ry={7} />
      <path d="M-4-6Q-4 6-12 12Q-10 20 0 19Q10 20 12 12Q4 6 4-6Z" fill="#ffb52e" stroke="#d98a14" strokeWidth="1" />
      <path d="M-18 25Q-17 13 0 15Q17 13 18 25Q9 27 0 25Q-9 27-18 25Z" fill="#1a1512" />
      <g fill="none" stroke="#3b4046" strokeWidth="2.600"><circle cx="-22" cy="-4" r="15" /><circle cx="22" cy="-4" r="15" /><path d="M-7-6Q0-11 7-6M-37-6H-40M37-6H40" /></g>
      <path d="M-36-18Q-34-30-18-28Q-8-27-9-20Q-22-26-36-18ZM36-18Q34-30 18-28Q8-27 9-20Q22-26 36-18Z" fill="#1a1512" stroke="#1a1512" strokeWidth="3" strokeLinejoin="round" />
    </>
  ),
  starEyes: (<><Disc y={-2} /><At y={-2}><Grin /></At><Starry x={-23} y={-17} rot={-8} /><Starry x={23} y={-17} rot={8} /></>),
  party: (
    <>
      <Disc />
      <Blush x={26} />
      <SoftBrows x={20} y={-17} />
      <Pair x={14.500} y={-1}><ShutEye /></Pair>
      <path d="M-46-47L-9-36Q-17-23-34-14Z" fill="#2f49d8" />
      <path d="M-38-44L-43-36M-28-42L-39-26M-17-39L-34-19" stroke="#ff5bd2" strokeWidth="4" />
      <Stroke d="M2 11Q12 13 11 16Q9 20 3 22Q11 24 11 27Q9 31 2 32" w={2.6} />
      <path d="M3 21L20 19L34 21V25L20 25L3 23Z" fill="#4b2ad0" />
      <circle cx="41" cy="15" r="6" fill="none" stroke="#6e45e6" strokeWidth="3" />
      <Stroke d="M33 23Q47 26 47 15" w={3} c="#3c8bf0" />
      <g>
        <path d="M-13-46l6 2-3 5-5-3z" fill="#ff9a3c" /><path d="M8-38l5-4 4 4-5 4z" fill="#ec3b63" />
        <path d="M32-43l5-3 4 4-5 3z" fill="#2f6fe6" /><path d="M38-22h7v6h-6z" fill="#ffe83b" />
        <path d="M-44 18l5-3 4 4-5 4z" fill="#2f6fe6" /><path d="M-43 37l5-3 4 4-5 4z" fill="#ec3b63" />
        <path d="M-22 41l7-1-2 6-4 1z" fill="#ffe83b" /><path d="M35 31l6 1-1 5-5-1z" fill="#ff9a3c" />
      </g>
    </>
  ),
  disappointed: (<><Disc /><Pair x={19} y={4}><path d="M-10 4Q0-5 10-4Q4 4-10 4Z" fill={EYE} stroke={BROWN} strokeWidth="1.600" strokeLinejoin="round" /></Pair><SmallFrown /></>),
  worried: (<><Disc /><Pair x={22} y={-19}><Stroke d="M-9 4Q-2-3 9-4" w={2.8} /></Pair><Dots x={17} y={-1} /><SmallFrown y={20} w={17} /></>),
  confused: (<><Disc /><Dots /><Stroke d="M-19 20Q-2 10 19 15" w={3} /></>),
  frown: (<><Disc /><Dots x={14.5} y={-9.5} ry={7.5} /><Stroke d="M-19 22Q0 9 19 22" w={3} /></>),
  sad: (<><Disc /><Dots x={14} /><Stroke d="M-20 21Q0-6 21 21" w={3} /></>),
  persevere: (<><Disc /><SadBrows x={24} y={-15} /><Squint x={15} y={5} /><SmallFrown /></>),
  confounded: (<><Disc /><Squint x={15} y={5} /><Stroke d="M-21 26L-15 22L-7 28L0 23L7 28L15 22L21 26" w={5} /></>),
  tired: (<><Disc /><Pair x={14} y={-30}><Stroke d="M-9 4Q2 2 9-5" /></Pair><Squint x={15} y={-10} /><Wail /></>),
  plead: (<><Disc /><Pair x={23} y={-17}><Stroke d="M-8 5Q3 3 8-6" /></Pair><PleadEyes /><SmallFrown y={28} w={6} /></>),
  cry: (<><Disc /><RaisedBrows x={20} y={-15} /><Dots x={11} y={-3} ry={7} /><SmallFrown y={25} w={10} /><Drop x={-16} y={22} /></>),
};

const FREQUENT = [
  'monkey', 'joy', 'heart', 'heartEyes', 'unamused',
  'ok', 'relaxed', 'blush', 'kissHeart', 'sob',
  'weary', 'hearts', 'pensive', 'smirk', 'beam',
  'flushed', 'thumb', 'peace', 'wink', 'relieved',
  'tipping', 'cool', 'notes', 'eyes', 'expressionless',
  'sleeping', 'smile',
];

const SMILEYS = [
  'grinning', 'smiley', 'smile', 'beam', 'laughing',
  'tears', 'sweat', 'joy', 'rofl', 'smileTear',
  'relaxed', 'blush', 'angel', 'slight', 'upside',
  'wink', 'relieved', 'heartEyes', 'adore', 'kissHeart',
  'kissing', 'kissSmile', 'kissShut', 'yum', 'tongue',
  'tongueSquint', 'tongueWink', 'zany', 'brow', 'monocle',
  'nerd', 'cool', 'disguise', 'starEyes', 'party',
  'smirk', 'unamused', 'disappointed', 'pensive', 'worried',
  'confused', 'frown', 'sad', 'persevere', 'confounded',
  'tired', 'weary', 'plead', 'cry', 'sob',
];

const EmojiSection = ({ title, names }) => (
  <Section>
    <SectionTitle>{title}</SectionTitle>
    <EmojiGrid>
      {names.map((n) => (
        <EmojiSvg key={n} viewBox="-63 -56 126 112">{EMOJI[n]}</EmojiSvg>
      ))}
    </EmojiGrid>
  </Section>
);

/* ---------- category icons, 48 x 48 ---------- */

const hex = (cx, cy, r, turn = 0) =>
  Array.from({ length: 6 }, (_, i) => {
    const a = (Math.PI / 3) * i + turn;
    return `${(cx + r * Math.cos(a)).toFixed(1)},${(cy + r * Math.sin(a)).toFixed(1)}`;
  }).join(' ');

const CATEGORIES = [
  { id: 'recent', active: true, art: <><circle cx="24" cy="24" r="22.500" fill="none" stroke="#fff" strokeWidth="3" /><path d="M24.500 6.500V24.500H12" fill="none" stroke="#fff" strokeWidth="3" /></> },
  {
    id: 'smileys',
    art: (
      <>
        <path fillRule="evenodd" d="M24 0a24 24 0 1 0 0 48a24 24 0 1 0 0-48ZM16 13.500a2.800 3.400 0 1 1 0 6.800a2.800 3.400 0 1 1 0-6.800ZM32 13.500a2.800 3.400 0 1 1 0 6.800a2.800 3.400 0 1 1 0-6.800ZM8 26Q24 30 40 26C39.500 35 33 41 24 41C15 41 8.500 35 8 26Z" />
        <path d="M11.500 29Q24 32 36.500 29Q35 35 24 35.500Q13 35 11.500 29Z" />
      </>
    ),
  },
  {
    id: 'animals',
    art: (
      <>
        <mask id="bearMask">
          <rect width="48" height="48" fill="#fff" />
          <circle cx="15" cy="25" r="2.700" fill="#000" /><circle cx="33" cy="25" r="2.700" fill="#000" />
          <path d="M20 31.500Q24 30 28 31.500Q28 35 24.800 36.500V41Q27 42.500 28.500 40.500M24 36.500V41Q22 42.500 19.500 40.500" fill="none" stroke="#000" strokeWidth="1.500" />
          <path d="M20 31.500Q24 30 28 31.500Q28 35 24 37Q20 35 20 31.500Z" fill="#000" />
        </mask>
        <path mask="url(#bearMask)" d="M4 19C-3 8 6-3 15 1.500Q18 3 19 5H29Q30 3 33 1.500C42-3 51 8 44 19Q48 26 48 32Q47 41 37 43H34Q30 48 24 48Q18 48 14 43H11Q1 41 0 32Q0 26 4 19Z" />
      </>
    ),
  },
  {
    id: 'food',
    art: (
      <>
        <mask id="pattyMask">
          <rect width="48" height="48" fill="#fff" />
          <path d="M11 34.800H17L28.500 39.500L40 34.800H47" fill="none" stroke="#000" strokeWidth="1.600" />
        </mask>
        <path d="M0 11H17.500L20.500 0L32 4L30.800 6.500L22.200 3.500L20.500 11H25L24.500 19.500C14 22 8.500 27 8 34V48H3.500Z" />
        <path mask="url(#pattyMask)" d="M10.500 30.500C11 18 46.500 18 47 30.500ZM11 34H47Q49 37.500 47 40.500H11Q8.500 37 11 34ZM11 43.500H47.500Q47.500 48 44 48H15Q11 48 11 43.500Z" />
      </>
    ),
  },
  {
    id: 'activity',
    art: (
      <>
        <clipPath id="ballClip"><circle cx="24" cy="24" r="23.500" /></clipPath>
        <g clipPath="url(#ballClip)">
          {[[26.5, 14.5], [20, 27.500], [27, 39], [6, 26.500], [43, 18], [41.500, 35], [20, 2.500], [6, 10], [9.500, 41]].map(([x, y]) => (
            <polygon key={x + '-' + y} points={hex(x, y, 7.8, 0.5)} />
          ))}
        </g>
        <circle cx="24" cy="24" r="23" fill="none" stroke="#fff" strokeWidth="2" />
      </>
    ),
  },
  {
    id: 'travel',
    art: (
      <g>
        <path d="M1.500 45V19.500H11.500V1.500H29.500V13.500H46.500V45" fill="none" stroke="#fff" strokeWidth="3" />
        <path fillRule="evenodd" d="M11 3H30V18Q27 17.500 24 17.500Q17 18 13 21H11ZM16 6V9.500H19.500V6ZM21.500 6V9.500H25V6ZM16 12V15.500H19.500V12ZM21.500 12V15.500H25V12Z" />
        <path d="M6 24h3v3H6zM39 24h3v3h-3zM39 18h3v3h-3z" />
        <path fillRule="evenodd" d="M12 32Q12 20 24 20Q36 20 36 32Q39.500 32 39.500 35V42H38.500V46Q38.500 48 36 48Q33.500 48 33.500 46V44H15V46Q15 48 12.500 48Q10 48 10 46V42H9V35Q9 32 12 32ZM15.500 32H33Q33 23 24 23Q15.500 23 15.500 32ZM12 34.500V38H15.500V34.500ZM33 34.500V38H36.500V34.500ZM17 39V40.500H31V39Z" />
      </g>
    ),
  },
  {
    id: 'objects',
    art: <path fillRule="evenodd" d="M24 0C34 0 41 7.500 41 16C41 25 34 28 31.500 36V45Q31.500 48 28.500 48H20Q17 48 17 45V36C14.500 28 7 25 7 16C7 7.500 14 0 24 0ZM20 38V45H28.500V38ZM23.400 36H25V26.500L29.500 24Q31 22 29 21Q27 21 27.500 24L24.200 25.500L21 24Q21.500 21 19.500 21Q17.500 22 19 24L23.400 26.500Z" />,
  },
  {
    id: 'symbols',
    art: (
      <>
        <path d="M2 2H23V4.500H2ZM2 8.500H23V11H14V23H11V11H2Z" />
        <path d="M34 0H36Q37 6 41 9Q46 12 42 17Q43 11 36 9V19Q35 23 30 23.500Q25.500 23 26.500 19Q28 15.500 34 16Z" />
        <text x="1" y="47" fontFamily="Inter, sans-serif" fontWeight="500" fontSize="26" textLength="45" lengthAdjust="spacingAndGlyphs">&amp;%</text>
      </>
    ),
  },
  { id: 'flags', art: <path d="M7 4.500H9.500Q17 9 24 6Q34 1 43 5V30.500Q34 25 26 29Q18 33 11 29.500V46H7Z" /> },
];

const SearchIcon = () => (
  <BarIcon viewBox="0 0 42 42" $w={42} $h={42} $drop={4} strokeWidth="4">
    <circle cx="17" cy="17" r="14.500" />
    <path d="M28 28L39 39" strokeWidth="5" />
  </BarIcon>
);

const DeleteIcon = () => (
  <BarIcon viewBox="0 0 53 44" $w={53} $h={44} $drop={5} $opacity={0.74} strokeWidth="3.800">
    <path d="M21 2.500H46Q50.500 2.500 50.500 7V37Q50.500 41.500 46 41.500H21Q18.500 41.500 17 39.500L3.500 24.500Q1.500 22 3.500 19.500L17 4.500Q18.500 2.500 21 2.500Z" />
    <path d="M22 14L39 31M39 14L22 31" />
  </BarIcon>
);

const HideKeyboardIcon = () => (
  <BarIcon viewBox="0 0 58 50" $w={58} $h={50} $drop={14} strokeWidth="3">
    <rect x="1.500" y="1.500" width="55" height="35" rx="4.500" />
    <g fill="#fff" stroke="none">
      {[9, 16.5].map((y) => [8, 15.500, 23, 30.500, 38, 45.500].map((x) => <rect key={x + '-' + y} x={x} y={y} width="4.500" height="4.500" rx=".8" />))}
      <rect x="8" y="24" width="4.500" height="4.500" rx=".8" />
      <rect x="16" y="24" width="26.500" height="4.500" rx=".8" />
      <rect x="45.500" y="24" width="4.500" height="4.500" rx=".8" />
    </g>
    <path d="M14.500 42L29.500 48L43.500 42" />
  </BarIcon>
);

export default function App() {
  return (
    <Screen>
      <GlobalStyle />
      <EmojiPaint />
      <NavBar>
        <Multitask><Dot /><Dot /><Dot /></Multitask>
        <BackButton>
          <BackArrow viewBox="0 0 28 44"><path d="M22 5L6 22L22 39" /></BackArrow>
          Search
        </BackButton>
        <Title>Send to a Friend</Title>
      </NavBar>

      <Content>
        <Balance>
          <BalanceLine>
            <BalanceLabel>balance:</BalanceLabel>
            <BalanceValue><Currency>Ʀ</Currency>47.29</BalanceValue>
          </BalanceLine>
          <Fiat>$5</Fiat>
        </Balance>

        <Panel $height={210}>
          <Amount>9.615384615384615</Amount>
          <Amount>5</Amount>
        </Panel>

        <Panel $height={293} $top>
          <Note>For movie tickets </Note>
          <NoteEmoji>
            {[0, 1, 2].map((i) => (
              <MiniEmoji key={i} viewBox="-46 -44 92 92"><MonkeyArt /></MiniEmoji>
            ))}
          </NoteEmoji>
          <Caret />
        </Panel>

        <Actions>
          <ActionButton>Pay sarrah</ActionButton>
          <ActionButton>Transactions</ActionButton>
          <ActionButton $danger>Report</ActionButton>
        </Actions>
      </Content>

      <Keyboard>
        <Sections>
          <EmojiSection title="FREQUENTLY USED" names={FREQUENT} />
          <EmojiSection title="SMILEYS & PEOPLE" names={SMILEYS} />
        </Sections>
        <BottomBar>
          <AbcKey>A B C</AbcKey>
          <KeySlot $width={76}><SearchIcon /></KeySlot>
          <KeySlot $width={57} />
          {CATEGORIES.map((c) => (
            <CategoryKey key={c.id}>
              <CategoryDisc $active={c.active}>
                <CategoryIcon $active={c.active} viewBox="0 0 48 48">{c.art}</CategoryIcon>
              </CategoryDisc>
            </CategoryKey>
          ))}
          <KeySlot $width={211}>space</KeySlot>
          <KeySlot $width={118}><DeleteIcon /></KeySlot>
          <KeySlot $width={202}><HideKeyboardIcon /></KeySlot>
        </BottomBar>
      </Keyboard>
    </Screen>
  );
}
